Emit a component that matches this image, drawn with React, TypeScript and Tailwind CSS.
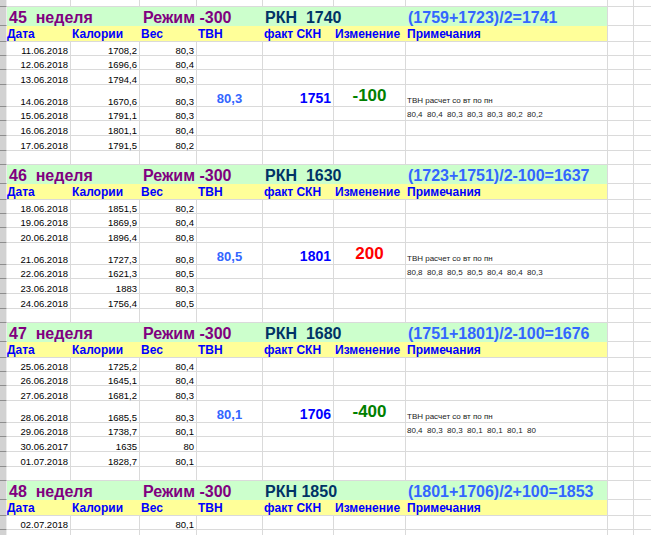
import React from 'react';

interface Week {
  num: number;
  rkn: string;
  formula: string;
  tvn?: string;
  skn?: string;
  change?: string;
  changeColor?: string;
  notes?: string;
  rows: [string, string, string][];
}

const weeks: Week[] = [
  {
    num: 45,
    rkn: 'РКН  1740',
    formula: '(1759+1723)/2=1741',
    tvn: '80,3',
    skn: '1751',
    change: '-100',
    changeColor: 'text-[#008000]',
    notes: '80,4  80,4  80,3  80,3  80,3  80,2  80,2',
    rows: [
      ['11.06.2018', '1708,2', '80,3'],
      ['12.06.2018', '1696,6', '80,4'],
      ['13.06.2018', '1794,4', '80,3'],
      ['14.06.2018', '1670,6', '80,3'],
      ['15.06.2018', '1791,1', '80,3'],
      ['16.06.2018', '1801,1', '80,4'],
      ['17.06.2018', '1791,5', '80,2'],
    ],
  },
  {
    num: 46,
    rkn: 'РКН  1630',
    formula: '(1723+1751)/2-100=1637',
    tvn: '80,5',
    skn: '1801',
    change: '200',
    changeColor: 'text-[#ff0000]',
    notes: '80,8  80,8  80,5  80,5  80,4  80,4  80,3',
    rows: [
      ['18.06.2018', '1851,5', '80,2'],
      ['19.06.2018', '1869,9', '80,4'],
      ['20.06.2018', '1896,4', '80,8'],
      ['21.06.2018', '1727,3', '80,8'],
      ['22.06.2018', '1621,3', '80,5'],
      ['23.06.2018', '1883', '80,3'],
      ['24.06.2018', '1756,4', '80,5'],
    ],
  },
  {
    num: 47,
    rkn: 'РКН  1680',
    formula: '(1751+1801)/2-100=1676',
    tvn: '80,1',
    skn: '1706',
    change: '-400',
    changeColor: 'text-[#008000]',
    notes: '80,4  80,3  80,3  80,1  80,1  80,1  80',
    rows: [
      ['25.06.2018', '1725,2', '80,4'],
      ['26.06.2018', '1645,1', '80,4'],
      ['27.06.2018', '1681,2', '80,3'],
      ['28.06.2018', '1685,5', '80,3'],
      ['29.06.2018', '1738,7', '80,1'],
      ['30.06.2017', '1635', '80'],
      ['01.07.2018', '1828,7', '80,1'],
    ],
  },
  {
    num: 48,
    rkn: 'РКН 1850',
    formula: '(1801+1706)/2+100=1853',
    rows: [['02.07.2018', '', '80,1']],
  },
];

const rowHeights = ['h-[14px]', 'h-[14px]', 'h-[15px]', 'h-[22px]', 'h-[14px]', 'h-[15px]', 'h-[15px]'];

const Strip = () => (
  <div className="w-[7px] shrink-0 bg-[#d2d2d2] border-r border-b border-r-[#ececec] border-b-[#8e8e8e]" />
);

// empty row: only gridlines
const BlankRow = ({ h }: { h: string }) => (
  <div className={`flex ${h}`}>
    <Strip />
    <div className="w-[64px] shrink-0 border-r border-b border-[#dadada]" />
    <div className="w-[69px] shrink-0 border-r border-b border-[#dadada]" />
    <div className="w-[57px] shrink-0 border-r border-b border-[#dadada]" />
    <div className="w-[66px] shrink-0 border-r border-b border-[#dadada]" />
    <div className="w-[71px] shrink-0 border-r border-b border-[#dadada]" />
    <div className="w-[72px] shrink-0 border-r border-b border-[#dadada]" />
    <div className="w-[202px] shrink-0 border-r border-b border-[#dadada]" />
    <div className="w-[26px] shrink-0 border-r border-b border-[#dadada]" />
    <div className="flex-1 border-b border-[#dadada]" />
  </div>
);

const Tail = () => (
  <>
    <div className="w-[26px] shrink-0 border-r border-b border-[#dadada]" />
    <div className="flex-1 border-b border-[#dadada]" />
  </>
);

const WeekBlock = ({ week }: { week: Week }) => (
  <div className="flex flex-col">
    {/* title */}
    <div className="flex h-[19px]">
      <Strip />
      <div className="flex w-[601px] shrink-0 items-end bg-[#ccffcc] border-r border-[#dadada] text-[16px] font-bold leading-none whitespace-pre">
        <span className="w-[133px] shrink-0 pl-[2px] text-[#800080]">{week.num}  неделя</span>
        <span className="w-[123px] shrink-0 pl-[3px] text-[#800080]">Режим -300</span>
        <span className="w-[143px] shrink-0 pl-[2px] text-[#003366]">{week.rkn}</span>
        <span className="w-[202px] shrink-0 pl-[2px] text-[#3366ff]">{week.formula}</span>
      </div>
      <Tail />
    </div>
    {/* header */}
    <div className="flex h-[16px]">
      <Strip />
      <div className="flex w-[601px] shrink-0 items-end bg-[#ffff99] border-r border-b border-[#dadada] pb-[1px] text-[12px] font-bold leading-none text-[#0000ff] whitespace-pre">
        <span className="w-[64px] shrink-0">Дата</span>
        <span className="w-[69px] shrink-0 pl-[1px]">Калории</span>
        <span className="w-[57px] shrink-0 pl-[1px]">Вес</span>
        <span className="w-[66px] shrink-0 pl-[1px]">ТВН</span>
        <span className="w-[71px] shrink-0 pl-[1px]">факт СКН</span>
        <span className="w-[72px] shrink-0 pl-[1px]">Изменение</span>
        <span className="w-[202px] shrink-0 pl-[1px]">Примечания</span>
      </div>
      <Tail />
    </div>
    {week.rows.map((r, i) => (
      <div key={i} className={`flex ${rowHeights[i]} text-[9.5px] leading-none text-black`}>
        <Strip />
        <div className="flex w-[64px] shrink-0 items-end justify-end border-r border-b border-[#dadada] pr-[2px]">{r[0]}</div>
        <div className="flex w-[69px] shrink-0 items-end justify-end border-r border-b border-[#dadada] pr-[2px]">{r[1]}</div>
        <div className="flex w-[57px] shrink-0 items-end justify-end border-r border-b border-[#dadada] pr-[2px]">{r[2]}</div>
        <div className="flex w-[66px] shrink-0 items-end justify-center border-r border-b border-[#dadada] pb-[1px] text-[13px] font-bold text-[#3366ff]">
          {i === 3 ? week.tvn : ''}
        </div>
        <div className="flex w-[71px] shrink-0 items-end justify-end border-r border-b border-[#dadada] pb-[1px] pr-[2px] text-[14px] font-bold text-[#0000ff]">
          {i === 3 ? week.skn : ''}
        </div>
        <div className={`flex w-[72px] shrink-0 items-end justify-center border-r border-b border-[#dadada] pb-[2px] text-[17px] font-bold ${week.changeColor ?? ''}`}>
          {i === 3 ? week.change : ''}
        </div>
        <div className="flex w-[202px] shrink-0 items-end border-r border-b border-[#dadada] pb-[1px] pl-[1px] text-[8px] text-[#222] whitespace-pre">
          {i === 3 && week.notes ? 'ТВН расчет со вт по пн' : i === 4 ? week.notes : ''}
        </div>
        <Tail />
      </div>
    ))}
    {week.rows.length > 1 && <BlankRow h="h-[14px]" />}
  </div>
);

export default function App() {
  return (
    <div className="w-[651px] h-[535px] overflow-hidden bg-white font-['Liberation_Sans',Arial,sans-serif]">
      <BlankRow h="h-[7px]" />
      {weeks.map(w => (
        <WeekBlock key={w.num} week={w} />
      ))}
      <BlankRow h="h-[14px]" />
    </div>
  );
}
